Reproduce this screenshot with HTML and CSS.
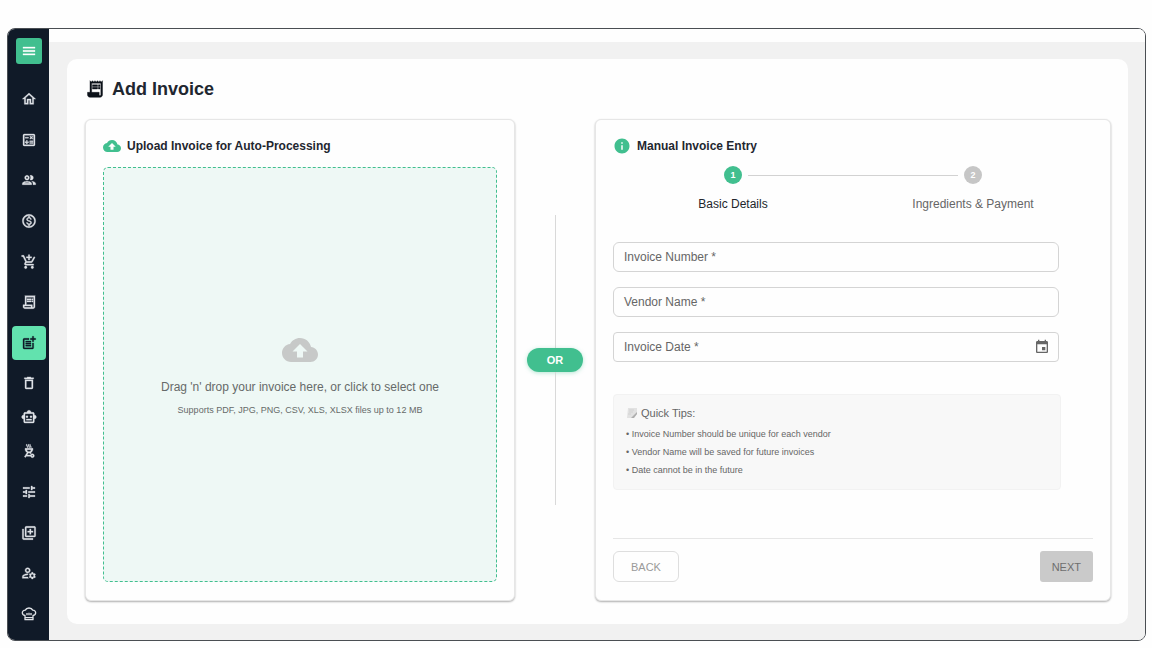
FILE: index.html
```html
<!DOCTYPE html>
<html lang="en">
<head>
<meta charset="utf-8">
<meta name="viewport" content="width=device-width, initial-scale=1">
<title>Add Invoice</title>
<link rel="stylesheet" href="styles.css">
</head>
<body>
<div class="window">
  <aside class="sidebar">
    <button class="menu-toggle" type="button" aria-label="Toggle menu"><svg class="icon" viewBox="0 0 24 24"><path d="M3 18h18v-2H3v2zm0-5h18v-2H3v2zm0-7v2h18V6H3z"/></svg></button>
    <nav class="nav" aria-label="Main">
      <a class="nav-item" href="#home" aria-label="Home"><svg class="icon" viewBox="0 0 24 24"><path d="m12 5.69 5 4.5V18h-2v-6H9v6H7v-7.81l5-4.5M12 3 2 12h3v8h6v-6h2v6h6v-8h3L12 3z"/></svg></a>
      <a class="nav-item" href="#costing" aria-label="Costing"><svg class="icon" viewBox="0 0 24 24"><path d="M19 3H5c-1.100 0-2 .9-2 2v14c0 1.100.9 2 2 2h14c1.100 0 2-.9 2-2V5c0-1.100-.9-2-2-2zm0 16H5V5h14v14z"/><path d="M6.250 7.720h5v1.500h-5zM13 15.750h5v1.500h-5zM13 13.250h5v1.500h-5zM8 18h1.500v-2h2v-1.500h-2v-2H8v2H6V16h2zM14.090 10.950l1.410-1.410 1.410 1.410 1.060-1.060-1.410-1.420 1.410-1.410L16.910 6 15.500 7.410 14.090 6l-1.060 1.060 1.410 1.410-1.410 1.420z"/></svg></a>
      <a class="nav-item" href="#people" aria-label="People"><svg class="icon" viewBox="0 0 24 24"><path d="M9 13.750c-2.340 0-7 1.170-7 3.500V19h14v-1.750c0-2.330-4.660-3.500-7-3.500zM4.340 17c.84-.58 2.870-1.250 4.660-1.250s3.820.67 4.660 1.250H4.340zM9 12c1.930 0 3.500-1.570 3.500-3.500S10.930 5 9 5 5.500 6.570 5.500 8.500 7.070 12 9 12zm0-5c.83 0 1.500.67 1.500 1.500S9.830 10 9 10s-1.500-.67-1.500-1.500S8.170 7 9 7zm7.040 6.810c1.160.84 1.960 1.960 1.960 3.440V19h4v-1.750c0-2.020-3.500-3.170-5.960-3.440zM15 12c1.930 0 3.500-1.570 3.500-3.500S16.930 5 15 5c-.54 0-1.040.13-1.500.35.63.89 1 1.980 1 3.150s-.37 2.260-1 3.150c.46.22.96.35 1.500.35z"/></svg></a>
      <a class="nav-item" href="#sales" aria-label="Sales"><svg class="icon" viewBox="0 0 24 24"><path d="M12 2C6.480 2 2 6.480 2 12s4.480 10 10 10 10-4.480 10-10S17.520 2 12 2zm0 18c-4.410 0-8-3.590-8-8s3.590-8 8-8 8 3.590 8 8-3.590 8-8 8zm.31-8.860c-1.770-.45-2.340-.94-2.340-1.670 0-.84.79-1.430 2.100-1.430 1.380 0 1.900.66 1.940 1.640h1.710c-.05-1.340-.87-2.570-2.490-2.970V5H10.900v1.690c-1.510.32-2.720 1.300-2.720 2.810 0 1.790 1.490 2.690 3.660 3.210 1.950.46 2.340 1.150 2.340 1.870 0 .53-.39 1.390-2.100 1.390-1.600 0-2.230-.72-2.320-1.640H8.040c.1 1.700 1.360 2.660 2.860 2.970V19h2.340v-1.670c1.520-.29 2.720-1.160 2.730-2.770-.01-2.200-1.900-2.960-3.660-3.420z"/></svg></a>
      <a class="nav-item" href="#orders" aria-label="Orders"><svg class="icon" viewBox="0 0 24 24"><path d="M11 9h2V6h3V4h-3V1h-2v3H8v2h3v3zm-4 9c-1.100 0-1.990.9-1.990 2S5.900 22 7 22s2-.9 2-2-.9-2-2-2zm10 0c-1.100 0-1.990.9-1.990 2s.89 2 1.990 2 2-.9 2-2-.9-2-2-2zm-8.900-5h7.450c.75 0 1.410-.41 1.750-1.030l3.860-7.010L19.420 4l-3.870 7H8.530L4.270 2H1v2h2l3.600 7.590-1.350 2.440C4.520 15.370 5.480 17 7 17h12v-2H7l1.100-2z"/></svg></a>
      <a class="nav-item" href="#invoices" aria-label="Invoices"><svg class="icon" viewBox="0 0 24 24"><path d="M19.500 3.500 18 2l-1.500 1.500L15 2l-1.500 1.500L12 2l-1.500 1.500L9 2 7.500 3.500 6 2v14H3v3c0 1.660 1.340 3 3 3h12c1.660 0 3-1.340 3-3V2l-1.500 1.500zM15 20H6c-.55 0-1-.45-1-1v-1h10v2zm4-1c0 .55-.45 1-1 1s-1-.45-1-1v-3H8V5h11v14z"/><path d="M9 7h6v2H9zM16 7h2v2h-2zM9 10h6v2H9zM16 10h2v2h-2z"/></svg></a>
      <a class="nav-item nav-item-active" href="#add-invoice" aria-label="Add invoice" aria-current="page"><svg class="icon" viewBox="0 0 24 24"><path d="M17 19.220H5V7h7V5H5c-1.100 0-2 .9-2 2v12c0 1.100.9 2 2 2h12c1.100 0 2-.9 2-2v-7h-2v7.220z"/><path d="M19 2h-2v3h-3v2h3v2.990h2V7h3V5h-3zM7 9h8v2H7zM7 12v2h8v-2h-3zM7 15h8v2H7z"/></svg></a>
      <div class="nav-group">
        <a class="nav-item" href="#waste" aria-label="Waste"><svg class="icon" viewBox="0 0 24 24"><path d="M6 19c0 1.100.9 2 2 2h8c1.100 0 2-.9 2-2V7H6v12zM8 9h8v10H8V9zm7.500-5-1-1h-5l-1 1H5v2h14V4h-3.500z"/></svg></a>
        <a class="nav-item" href="#assistant" aria-label="Assistant"><svg class="icon" viewBox="0 0 24 24"><path d="M20 9V7c0-1.100-.9-2-2-2h-3c0-1.660-1.340-3-3-3S9 3.340 9 5H6c-1.100 0-2 .9-2 2v2c-1.660 0-3 1.340-3 3s1.340 3 3 3v4c0 1.100.9 2 2 2h12c1.100 0 2-.9 2-2v-4c1.660 0 3-1.340 3-3s-1.340-3-3-3zm-2 10H6V7h12v12zm-9-6c-.83 0-1.500-.67-1.500-1.500S8.170 10 9 10s1.500.67 1.500 1.500S9.830 13 9 13zm7.500-1.500c0 .83-.67 1.500-1.500 1.500s-1.500-.67-1.500-1.500.67-1.500 1.500-1.500 1.500.67 1.500 1.500zM8 15h8v2H8v-2z"/></svg></a>
        <a class="nav-item" href="#grill" aria-label="Kitchen"><svg class="icon" viewBox="0 0 24 24"><path d="M17 22c1.660 0 3-1.340 3-3s-1.340-3-3-3c-1.300 0-2.400.84-2.820 2H9.140l1.990-3.060c.29.040.58.060.87.060s.58-.02.87-.06l1.020 1.570c.42-.53.960-.95 1.600-1.210l-.6-.93C16.750 13.270 18 11.340 18 9c0-.34-.03-.67-.08-1H6.080C6.030 8.330 6 8.660 6 9c0 2.340 1.250 4.270 3.110 5.370l-4.020 6.200 1.680 1.090L7.840 20h6.340c.42 1.160 1.520 2 2.820 2zm0-4c.55 0 1 .45 1 1s-.45 1-1 1-1-.45-1-1 .45-1 1-1zM8.580 10h6.840c-.46 1.700-1.900 3-3.420 3s-2.960-1.300-3.420-3z"/><path d="M9.410 7h1c.15-1.150.23-1.640-.89-2.960-.42-.5-.68-.78-.46-2.040h-.99c-.21 1.340-.14 2.110.89 3.340.22.260.75.620.45 1.660zM11.890 7h1c.15-1.150.23-1.640-.89-2.960-.42-.5-.68-.78-.46-2.040h-.99c-.21 1.340-.14 2.110.89 3.340.22.260.75.620.45 1.660zM14.410 7h1c.15-1.150.23-1.640-.89-2.960-.42-.5-.68-.78-.46-2.040h-.99c-.21 1.340-.14 2.110.89 3.340.22.260.75.620.45 1.660z"/></svg></a>
      </div>
      <a class="nav-item" href="#settings" aria-label="Settings"><svg class="icon" viewBox="0 0 24 24"><path d="M3 17v2h6v-2H3zM3 5v2h10V5H3zm10 16v-2h8v-2h-8v-2h-2v6h2zM7 9v2H3v2h4v2h2V9H7zm14 4v-2H11v2h10zm-6-4h2V7h4V5h-4V3h-2v6z"/></svg></a>
      <a class="nav-item" href="#library" aria-label="Library"><svg class="icon" viewBox="0 0 24 24"><path d="M4 6H2v14c0 1.100.9 2 2 2h14v-2H4V6zm16-4H8c-1.100 0-2 .9-2 2v12c0 1.100.9 2 2 2h12c1.100 0 2-.9 2-2V4c0-1.100-.9-2-2-2zm0 14H8V4h12v12zm-7-2h2v-3h3V9h-3V6h-2v3h-3v2h3z"/></svg></a>
      <a class="nav-item" href="#accounts" aria-label="Manage accounts"><svg class="icon" viewBox="0 0 24 24"><path d="M4 18v-.65c0-.34.16-.66.41-.81C6.100 15.530 8.030 15 10 15c.03 0 .05 0 .08.010.1-.7.300-1.370.590-1.980-.22-.02-.440-.030-.670-.030-2.420 0-4.680.67-6.610 1.820-.88.520-1.390 1.500-1.390 2.530V20h9.260c-.42-.6-.75-1.280-.97-2H4zM10 12c2.210 0 4-1.790 4-4s-1.790-4-4-4-4 1.790-4 4 1.790 4 4 4zm0-6c1.100 0 2 .9 2 2s-.9 2-2 2-2-.9-2-2 .9-2 2-2zM20.750 16c0-.22-.03-.42-.06-.63l1.140-1.010-1-1.730-1.450.490c-.32-.27-.68-.48-1.080-.63L18 11h-2l-.300 1.490c-.4.150-.76.360-1.080.63l-1.450-.49-1 1.730 1.140 1.010c-.03.210-.06.410-.06.630s.03.420.06.630l-1.140 1.010 1 1.730 1.450-.49c.320.270.680.480 1.080.63L16 21h2l.300-1.490c.4-.15.760-.36 1.080-.63l1.450.49 1-1.730-1.140-1.010c.03-.21.060-.41.060-.63zM17 18c-1.100 0-2-.9-2-2s.9-2 2-2 2 .9 2 2-.9 2-2 2z"/></svg></a>
      <a class="nav-item" href="#recipes" aria-label="Recipes"><svg class="icon icon-outline" viewBox="0 0 24 24"><path d="M6 20.500v-6.200C3.500 14 2 12.300 2 10.300c0-2.400 1.900-4.200 4.400-4.100C7.300 4.200 9.400 3 12 3s4.700 1.200 5.600 3.200c2.500-.1 4.400 1.700 4.400 4.100 0 2-1.500 3.700-4 4v6.200H6zM6 17.500h12M9 10.500v3.500M12 10v4M15 10.500v3.500"/></svg></a>
    </nav>
  </aside>

  <div class="content">
    <div class="topbar"></div>
    <main class="panel">
      <h1 class="title"><svg class="title-icon" viewBox="0 0 24 24"><path d="M19.500 3.500 18 2l-1.500 1.500L15 2l-1.500 1.500L12 2l-1.500 1.500L9 2 7.500 3.500 6 2v14H3v3c0 1.660 1.340 3 3 3h12c1.660 0 3-1.340 3-3V2l-1.500 1.500zM19 19c0 .55-.45 1-1 1s-1-.45-1-1v-3H8V5h11v14z"/><path d="M9 7h6v2H9zM16 7h2v2h-2zM9 10h6v2H9zM16 10h2v2h-2z"/></svg>Add Invoice</h1>

      <div class="columns">
        <section class="card">
          <h2 class="card-title"><svg class="card-icon" viewBox="0 0 24 24"><path d="M19.350 10.040C18.670 6.590 15.640 4 12 4 9.110 4 6.600 5.640 5.350 8.040 2.340 8.360 0 10.910 0 14c0 3.310 2.690 6 6 6h13c2.760 0 5-2.240 5-5 0-2.640-2.050-4.780-4.650-4.960zM14 13v4h-4v-4H7l5-5 5 5h-3z"/></svg>Upload Invoice for Auto-Processing</h2>
          <label class="dropzone">
            <input class="file-input" type="file">
            <svg class="drop-icon" viewBox="0 0 24 24"><path d="M19.350 10.040C18.670 6.590 15.640 4 12 4 9.110 4 6.600 5.640 5.350 8.040 2.340 8.360 0 10.910 0 14c0 3.310 2.690 6 6 6h13c2.760 0 5-2.240 5-5 0-2.640-2.050-4.780-4.650-4.960zM14 13v4h-4v-4H7l5-5 5 5h-3z"/></svg>
            <span class="drop-text">Drag 'n' drop your invoice here, or click to select one</span>
            <span class="drop-hint">Supports PDF, JPG, PNG, CSV, XLS, XLSX files up to 12 MB</span>
          </label>
        </section>

        <div class="divider">
          <span class="divider-line"></span>
          <span class="divider-label">OR</span>
          <span class="divider-line"></span>
        </div>

        <section class="card">
          <h2 class="card-title"><svg class="card-icon" viewBox="0 0 24 24"><path d="M12 2C6.480 2 2 6.480 2 12s4.480 10 10 10 10-4.480 10-10S17.520 2 12 2zm1 15h-2v-6h2v6zm0-8h-2V7h2v2z"/></svg>Manual Invoice Entry</h2>
          <ol class="stepper">
            <li class="step step-active"><span class="step-number">1</span><span class="step-label">Basic Details</span></li>
            <li class="step"><span class="step-number">2</span><span class="step-label">Ingredients &amp; Payment</span></li>
          </ol>
          <form class="form">
            <div class="fields">
              <div class="field"><label for="number">Invoice Number *</label><input id="number" type="text" required></div>
              <div class="field"><label for="vendor">Vendor Name *</label><input id="vendor" type="text" required></div>
              <div class="field field-date"><label for="date">Invoice Date *</label><input id="date" type="text" required><button class="date-button" type="button" aria-label="Choose date"><svg class="icon" viewBox="0 0 24 24"><path d="M17 12h-5v5h5v-5zM16 1v2H8V1H6v2H5c-1.110 0-1.990.9-1.990 2L3 19c0 1.100.89 2 2 2h14c1.100 0 2-.9 2-2V5c0-1.100-.9-2-2-2h-1V1h-2zm3 18H5V8h14v11z"/></svg></button></div>
            </div>
            <div class="tips">
              <p class="tips-title"><svg class="memo" viewBox="0 0 12 12"><path class="memo-paper" d="M2 1h9v6L7 11H1z"/><path class="memo-lines" d="M3 3h5M3 5h4M2 7h3"/><path class="memo-fold" d="m5 11 6-6v2L8 11z"/></svg>Quick Tips:</p>
              <p class="tip">• Invoice Number should be unique for each vendor</p>
              <p class="tip">• Vendor Name will be saved for future invoices</p>
              <p class="tip">• Date cannot be in the future</p>
            </div>
            <div class="actions">
              <button class="button button-back" type="button" disabled>BACK</button>
              <button class="button button-next" type="submit" disabled>NEXT</button>
            </div>
          </form>
        </section>
      </div>
    </main>
  </div>
</div>
</body>
</html>
```
FILE: styles.css
```css
* {
  box-sizing: border-box;
}

body {
  display: flex;
  min-height: 100vh;
  margin: 0;
  padding: 28px 6px 7px 7px;
  background: #fefefe;
  color: #1f2730;
  font-family: "Liberation Sans", Arial, sans-serif;
  font-size: 12px;
  line-height: 16px;
}

h1, h2, p, ol {
  margin: 0;
  padding: 0;
}

button, input {
  font: inherit;
  color: inherit;
}

svg {
  display: block;
  flex: none;
  fill: currentColor;
}

.window {
  display: flex;
  flex: 1;
  overflow: hidden;
  border: 1px solid #4a4e53;
  border-radius: 8px;
}

.sidebar {
  display: flex;
  flex: none;
  flex-direction: column;
  align-items: center;
  width: 41px;
  padding: 9px 0;
  background: #101a28;
  color: #dfe2e6;
}

.icon {
  width: 16px;
  height: 16px;
}

.sidebar .icon {
  stroke: currentColor;
  stroke-width: 0.5;
}

.sidebar .icon-outline {
  fill: none;
  stroke-width: 2;
  stroke-linejoin: round;
}

.menu-toggle {
  display: grid;
  place-items: center;
  width: 26px;
  height: 26px;
  padding: 0;
  border: 0;
  border-radius: 3px;
  background: #41bf8f;
  color: #fff;
}

.nav {
  display: flex;
  flex: 1;
  flex-direction: column;
  justify-content: space-between;
  margin-top: 18px;
}

.nav-item {
  display: grid;
  place-items: center;
  width: 34px;
  height: 34px;
  border-radius: 4px;
  color: inherit;
}

.nav-item-active {
  background: #62e2ae;
  color: #101a28;
}

.content {
  display: flex;
  flex: 1;
  flex-direction: column;
  min-width: 0;
  background: #f1f1f1;
}

.topbar {
  height: 13px;
  background: #fefefe;
}

.panel {
  display: flex;
  flex: 1;
  flex-direction: column;
  gap: 18px;
  margin: 17px 17px 16px 18px;
  padding: 18px 17px 23px 18px;
  border-radius: 10px;
  background: #fefefe;
}

.title {
  display: flex;
  align-items: center;
  gap: 7px;
  font-size: 18px;
  line-height: 24px;
}

.title-icon {
  width: 20px;
  height: 20px;
  color: #0b1119;
  stroke: currentColor;
  stroke-width: 0.5;
}

.columns {
  display: grid;
  flex: 1;
  grid-template-columns: minmax(0, 5fr) 80px minmax(0, 6fr);
}

.card {
  display: flex;
  flex-direction: column;
  padding: 17px 17px 18px;
  border: 1px solid #e6e6e6;
  border-radius: 6px;
  background: #fefefe;
  box-shadow: 0 1px 2px #00000050;
}

.card-title {
  display: flex;
  align-items: center;
  gap: 6px;
  font-size: 12px;
  line-height: 18px;
}

.card-icon {
  width: 18px;
  height: 18px;
  color: #41bf8f;
}

.dropzone {
  display: flex;
  flex: 1;
  flex-direction: column;
  align-items: center;
  justify-content: center;
  margin-top: 12px;
  border: 1px dashed #41bf8f;
  border-radius: 5px;
  background: #eef8f5;
  color: #666a69;
  cursor: pointer;
}

.file-input {
  position: absolute;
  width: 1px;
  height: 1px;
  opacity: 0;
}

.drop-icon {
  width: 36px;
  height: 36px;
  color: #c7c9c8;
}

.drop-text {
  margin-top: 11px;
}

.drop-hint {
  margin-top: 7px;
  font-size: 9px;
}

.divider {
  display: flex;
  flex-direction: column;
  align-items: center;
  align-self: center;
  height: 60%;
}

.divider-line {
  flex: 1;
  width: 1px;
  background: #d9d9d9;
}

.divider-label {
  padding: 4px 20px;
  border-radius: 12px;
  background: #41bf8f;
  box-shadow: 0 1px 4px #41bf8f60;
  color: #fff;
  font-size: 11px;
  font-weight: bold;
}

.stepper {
  display: flex;
  margin-top: 11px;
  list-style: none;
}

.step {
  position: relative;
  display: flex;
  flex: 1;
  flex-direction: column;
  align-items: center;
  gap: 12px;
  color: #666;
}

.step + .step::before {
  position: absolute;
  top: 9px;
  right: calc(50% + 15px);
  left: calc(-50% + 15px);
  height: 1px;
  background: #d2d2d2;
  content: "";
}

.step-active {
  color: #22262b;
}

.step-number {
  width: 18px;
  height: 18px;
  border-radius: 50%;
  background: #c6c6c6;
  color: #fff;
  font-size: 9px;
  font-weight: bold;
  line-height: 18px;
  text-align: center;
}

.step-active .step-number {
  background: #41bf8f;
}

.form {
  display: flex;
  flex: 1;
  flex-direction: column;
  margin-top: 30px;
}

.fields {
  display: flex;
  flex-direction: column;
  gap: 15px;
  margin-right: 34px;
}

.field {
  display: flex;
  align-items: center;
  height: 30px;
  padding: 0 8px 0 10px;
  border: 1px solid #d4d4d4;
  border-radius: 6px;
  color: #666;
}

.field-date {
  border-radius: 4px;
}

.field input {
  flex: 1;
  min-width: 0;
  border: 0;
  outline: 0;
  background: transparent;
}

.date-button {
  padding: 0;
  border: 0;
  background: none;
}

.tips {
  margin: 32px 32px 0 0;
  padding: 10px 12px;
  border: 1px solid #f2f2f2;
  border-radius: 4px;
  background: #f8f8f8;
  color: #666;
}

.tips-title {
  display: flex;
  align-items: center;
  gap: 3px;
  margin-bottom: 4px;
  font-size: 11px;
}

.memo {
  width: 12px;
  height: 12px;
}

.memo-paper {
  fill: #e2e2e2;
}

.memo-lines {
  stroke: #d2d2d2;
}

.memo-fold {
  fill: #aeaeae;
}

.tip {
  font-size: 9px;
  line-height: 18px;
}

.actions {
  display: flex;
  justify-content: space-between;
  margin-top: auto;
  padding-top: 12px;
  border-top: 1px solid #e6e6e6;
}

.button {
  height: 31px;
  border: 0;
  border-radius: 3px;
  font-size: 11px;
}

.button-back {
  padding: 0 17px;
  border: 1px solid #dedede;
  border-radius: 6px;
  background: transparent;
  color: #9a9a9a;
}

.button-next {
  padding: 0 12px;
  background: #cacaca;
  color: #6e6e6e;
}
```
